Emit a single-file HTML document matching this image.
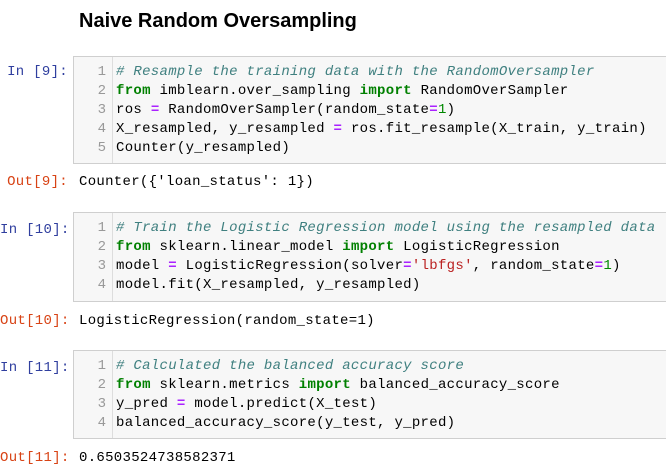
<!DOCTYPE html>
<html><head><style>
body{margin:0;width:666px;height:470px;background:#fff;position:relative;overflow:hidden;font-family:"Liberation Mono",monospace;}
h1{position:absolute;left:79px;top:10px;margin:0;font:bold 20px "Liberation Sans",sans-serif;color:#000;}
.p{position:absolute;width:68px;text-align:right;font-size:14px;line-height:19px;letter-spacing:0.3px;white-space:nowrap}
.in{color:#303F9F}.out{color:#D84315}
.box{position:absolute;left:73px;width:600px;background:#f7f7f7;border:1px solid #cfcfcf;box-sizing:border-box;}
.g{position:absolute;left:0;top:0;bottom:0;width:38px;border-right:1px solid #ddd;background:#f7f7f7;}
.code{position:absolute;left:0;top:6px;font-size:14px;letter-spacing:0.3px;line-height:19px;white-space:pre;color:#000}
.n{display:inline-block;width:32px;text-align:right;color:#999;margin-right:10px;letter-spacing:0}
.c{color:#408080;font-style:italic}.k{color:#008000;font-weight:bold}.o{color:#AA22FF;font-weight:bold}.d{color:#080}.s{color:#BA2121}
.r{position:absolute;left:79px;font-size:14px;letter-spacing:0.3px;line-height:19px;white-space:pre;color:#000}
</style></head><body>
<h1>Naive Random Oversampling</h1>

<div class="p in" style="left:0;top:63px">In [9]:</div>
<div class="box" style="top:56px;height:108px"><div class="g"></div><div class="code"><span class="n">1</span><span class="c"># Resample the training data with the RandomOversampler</span>
<span class="n">2</span><span class="k">from</span> imblearn.over_sampling <span class="k">import</span> RandomOverSampler
<span class="n">3</span>ros <span class="o">=</span> RandomOverSampler(random_state<span class="o">=</span><span class="d">1</span>)
<span class="n">4</span>X_resampled, y_resampled <span class="o">=</span> ros.fit_resample(X_train, y_train)
<span class="n">5</span>Counter(y_resampled)</div></div>
<div class="p out" style="left:0;top:173px">Out[9]:</div>
<div class="r" style="top:173px">Counter({'loan_status': 1})</div>

<div class="p in" style="left:0;top:221px">In [10]:</div>
<div class="box" style="top:212px;height:90px"><div class="g"></div><div class="code"><span class="n">1</span><span class="c"># Train the Logistic Regression model using the resampled data</span>
<span class="n">2</span><span class="k">from</span> sklearn.linear_model <span class="k">import</span> LogisticRegression
<span class="n">3</span>model <span class="o">=</span> LogisticRegression(solver<span class="o">=</span><span class="s">'lbfgs'</span>, random_state<span class="o">=</span><span class="d">1</span>)
<span class="n">4</span>model.fit(X_resampled, y_resampled)</div></div>
<div class="p out" style="left:0;top:312px">Out[10]:</div>
<div class="r" style="top:312px">LogisticRegression(random_state=1)</div>

<div class="p in" style="left:0;top:359px">In [11]:</div>
<div class="box" style="top:350px;height:89px"><div class="g"></div><div class="code"><span class="n">1</span><span class="c"># Calculated the balanced accuracy score</span>
<span class="n">2</span><span class="k">from</span> sklearn.metrics <span class="k">import</span> balanced_accuracy_score
<span class="n">3</span>y_pred <span class="o">=</span> model.predict(X_test)
<span class="n">4</span>balanced_accuracy_score(y_test, y_pred)</div></div>
<div class="p out" style="left:0;top:449px">Out[11]:</div>
<div class="r" style="top:449px">0.6503524738582371</div>
</body></html>
